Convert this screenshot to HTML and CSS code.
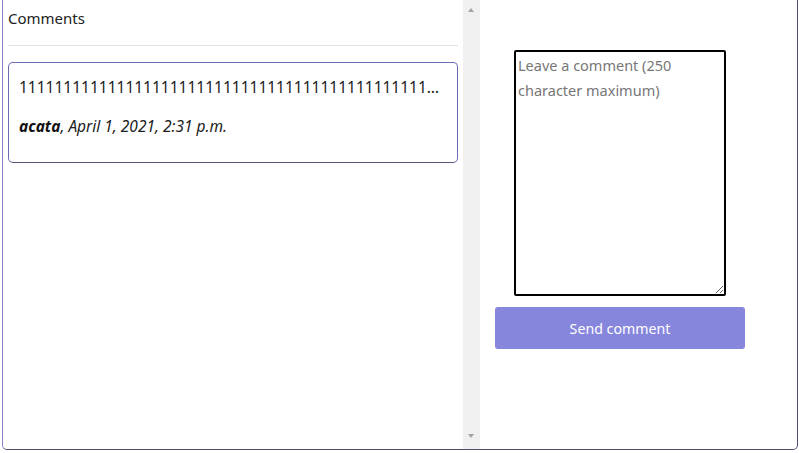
FILE: index.html
```html
<!DOCTYPE html>
<html>
<head>
<meta charset="utf-8">
<link rel="stylesheet" href="styles.css">
</head>
<body>
<div class="frame">
  <section class="comments">
    <div class="comments-body">
      <div class="comments-title">Comments</div>
      <hr class="divider">
      <article class="comment">
        <p class="comment-text">111111111111111111111111111111111111111111111111111111111111111111111111111111111111</p>
        <p class="comment-meta"><b>acata</b>, April 1, 2021, 2:31 p.m.</p>
      </article>
    </div>
    <div class="scrollbar">
      <span class="arrow arrow-up"></span>
      <span class="arrow arrow-down"></span>
    </div>
  </section>
  <section class="compose">
    <div class="compose-inner">
      <textarea class="compose-input" placeholder="Leave a comment (250 character maximum)" autofocus></textarea>
      <button class="send-btn">Send comment</button>
    </div>
  </section>
</div>
</body>
</html>
```

FILE: styles.css
```css
html, body {
  margin: 0;
  padding: 0;
  background: #ffffff;
}
body {
  font-family: "Noto Sans", "Open Sans", sans-serif;
  color: #212529;
  overflow: hidden;
}
.frame {
  display: flex;
  box-sizing: border-box;
  width: 796px;
  height: 454px;
  margin: -4px 0 0 2px;
  border: 1px solid #8a86c9;
  border-right-color: #4e4d75;
  border-bottom-color: #4e4d6a;
  border-radius: 5px;
}
.comments {
  display: flex;
  width: 477px;
  flex: none;
}
.comments-body {
  flex: 1;
  padding: 0 5px;
  min-width: 0;
}
.comments-title {
  padding: 11px 0 17px;
  font-size: 15px;
  line-height: 20px;
  color: #222;
}
.divider {
  margin: 0 0 16px 0;
  border: 0;
  border-top: 1px solid #e3e3e3;
  height: 0;
}
.comment {
  border: 1px solid #6d6ab5;
  border-bottom-color: #55547a;
  border-radius: 5px;
  padding: 12px 10px 24px;
}
.comment p {
  margin: 0;
  font-size: 15.5px;
  line-height: 24px;
  color: #212121;
}
.comment-text {
  white-space: nowrap;
  overflow: hidden;
  text-overflow: ellipsis;
  margin-bottom: 15px !important;
}
.comment-meta {
  font-style: italic;
}
.comment-meta b {
  font-weight: 700;
  color: #111;
}
.scrollbar {
  position: relative;
  width: 17px;
  flex: none;
  background: #f0f0f0;
}
.arrow {
  position: absolute;
  left: 5px;
  width: 0;
  height: 0;
  border-left: 3.5px solid transparent;
  border-right: 3.5px solid transparent;
}
.arrow-up {
  top: 11px;
  border-bottom: 4px solid #a3a3a3;
}
.arrow-down {
  bottom: 11px;
  border-top: 4px solid #a3a3a3;
}
.compose {
  flex: 1;
  padding: 0 0 0 15px;
}
.compose-inner {
  display: flex;
  flex-direction: column;
  align-items: center;
  width: 250px;
  padding-top: 53px;
  gap: 11px;
}
.compose-input {
  box-sizing: border-box;
  width: 212px;
  height: 246px;
  margin: 0;
  padding: 1px 2px 0;
  border: 2px solid #000;
  border-radius: 2px;
  font-family: "Noto Sans", "Open Sans", sans-serif;
  font-size: 14.5px;
  line-height: 25px;
  resize: vertical;
  outline: none;
}
.compose-input::placeholder {
  color: #777;
}
.send-btn {
  width: 250px;
  height: 42px;
  border: 0;
  border-radius: 3px;
  background: #8686dc;
  color: #fff;
  font-family: "Noto Sans", "Open Sans", sans-serif;
  font-size: 14.2px;
  padding: 0;
}
```
